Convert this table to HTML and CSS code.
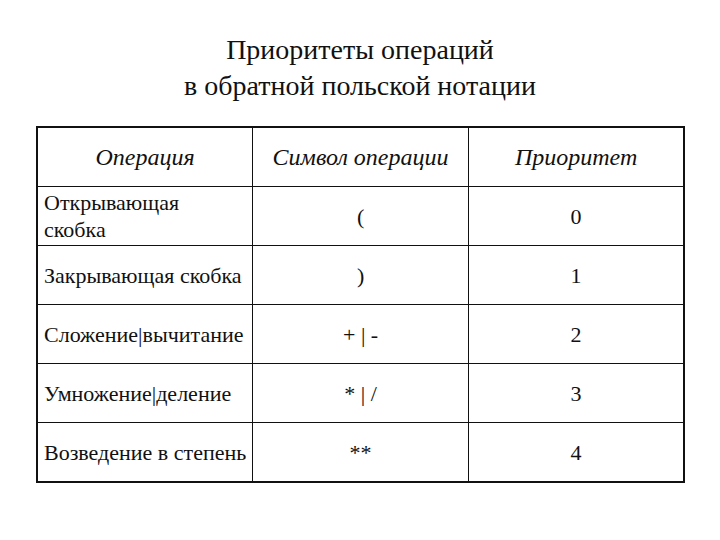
FILE: index.html
```html
<!DOCTYPE html>
<html lang="ru">
<head>
<meta charset="utf-8">
<link rel="stylesheet" href="styles.css">
</head>
<body>
<div class="slide">
  <h1 class="title">Приоритеты операций<br>в обратной польской нотации</h1>
  <table class="prio">
    <colgroup>
      <col class="c1"><col class="c2"><col class="c3">
    </colgroup>
    <thead>
      <tr><th>Операция</th><th>Символ операции</th><th>Приоритет</th></tr>
    </thead>
    <tbody>
      <tr><td class="op">Открывающая<br>скобка</td><td class="sym">(</td><td class="num">0</td></tr>
      <tr><td class="op">Закрывающая скобка</td><td class="sym">)</td><td class="num">1</td></tr>
      <tr><td class="op">Сложение|вычитание</td><td class="sym">+ | -</td><td class="num">2</td></tr>
      <tr><td class="op">Умножение|деление</td><td class="sym">* | /</td><td class="num">3</td></tr>
      <tr><td class="op">Возведение в степень</td><td class="sym">**</td><td class="num">4</td></tr>
    </tbody>
  </table>
</div>
</body>
</html>
```
FILE: styles.css
```css
html, body {
  margin: 0;
  padding: 0;
  background: #fff;
}
body {
  width: 720px;
  height: 540px;
  font-family: "Liberation Serif", "DejaVu Serif", serif;
  color: #111;
}
.slide {
  padding-top: 32px;
  display: flex;
  flex-direction: column;
  align-items: center;
}
.title {
  margin: 0 0 22px 0;
  font-weight: normal;
  font-size: 28px;
  line-height: 36px;
  text-align: center;
}
.prio {
  border-collapse: collapse;
  border: 2px solid #111;
  width: 649px;
  margin-left: 1px;
}
.c1 { width: 216px; }
.c2 { width: 217px; }
.c3 { width: 216px; }
.prio th, .prio td {
  border: 1px solid #111;
  height: 58px;
  padding: 0;
  vertical-align: middle;
}
.prio th {
  font-weight: normal;
  font-style: italic;
  font-size: 24px;
  text-align: center;
}
.prio td {
  font-size: 22px;
  line-height: 27px;
}
.prio td.op {
  text-align: left;
  padding-left: 6px;
}
.prio td.sym, .prio td.num {
  text-align: center;
}
```
